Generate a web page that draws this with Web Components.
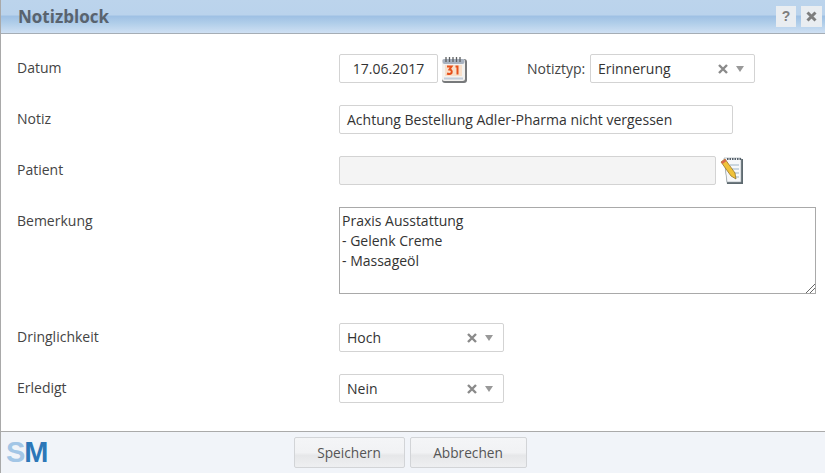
<!DOCTYPE html>
<html lang="de">
<head>
<meta charset="utf-8">
<title>Notizblock</title>
<style>
  html, body { margin: 0; padding: 0; background: #fff; }
  body { width: 825px; height: 473px; overflow: hidden; font-family: "Open Sans", "Liberation Sans", sans-serif; }
</style>
</head>
<body>
<note-dialog heading="Notizblock">
  <form-row label="Datum">
    <text-field style="width:99px;text-align:center">17.06.2017</text-field>
    <calendar-icon></calendar-icon>
    <span style="margin-left:59px;flex:0 0 63px;font-size:14px;color:#444">Notiztyp:</span>
    <combo-box style="width:165px" value="Erinnerung"></combo-box>
  </form-row>
  <form-row label="Notiz">
    <text-field style="width:394px">Achtung Bestellung Adler-Pharma nicht vergessen</text-field>
  </form-row>
  <form-row label="Patient">
    <text-field style="width:377px;background:#f4f4f4"></text-field>
    <notepad-icon></notepad-icon>
  </form-row>
  <form-row label="Bemerkung">
    <memo-field style="width:477px;height:87px">Praxis Ausstattung
- Gelenk Creme
- Massageöl</memo-field>
  </form-row>
  <form-row label="Dringlichkeit" style="margin-top:7px">
    <combo-box style="width:165px" value="Hoch"></combo-box>
  </form-row>
  <form-row label="Erledigt">
    <combo-box style="width:165px" value="Nein"></combo-box>
  </form-row>
  <dlg-button slot="footer" style="width:111px">Speichern</dlg-button>
  <dlg-button slot="footer" style="width:117px">Abbrechen</dlg-button>
</note-dialog>

<script>
class NoteDialog extends HTMLElement {
  connectedCallback() {
    this.attachShadow({ mode: 'open' });
    this.shadowRoot.innerHTML = `
      <style>
        :host {
          display: flex;
          flex-direction: column;
          width: 825px;
          height: 473px;
          box-sizing: border-box;
          border-left: 1px solid #a9a9a9;
          background: #fff;
        }
        header {
          height: 34px;
          box-sizing: border-box;
          display: flex;
          align-items: center;
          justify-content: space-between;
          padding: 0 3px 1px 17px;
          border-bottom: 1px solid #a5adb5;
          background: linear-gradient(180deg, #bcd4ec 0%, #bad3ec 44%, #9fc1e4 50%, #b2cfea 72%, #cfe0f3 100%);
        }
        h1 {
          margin: 0;
          font-size: 17px;
          font-weight: 700;
          color: #59636e;
        }
        .tools { display: flex; gap: 5px; }
        .tools span {
          width: 20px;
          height: 21px;
          display: flex;
          align-items: center;
          justify-content: center;
          background: #e9edf1;
          color: #7d7d7d;
          font: 700 14px "Liberation Sans", sans-serif;
        }
        .tools span:last-child { width: 21px; }
        main {
          flex: 1;
          display: flex;
          flex-direction: column;
          gap: 22px;
          padding: 20px 0 0 16px;
        }
        footer {
          height: 42px;
          box-sizing: border-box;
          position: relative;
          display: flex;
          justify-content: center;
          align-items: flex-start;
          gap: 5px;
          padding: 5px 6px 0 0;
          border-top: 1px solid #aaa;
          background: #f1f4f9;
        }
        .logo {
          position: absolute;
          left: 5px;
          top: 4px;
          font: 700 29px/32px "Liberation Sans", sans-serif;
          letter-spacing: -1px;
          color: #2c77b8;
        }
        .logo b { color: #a3c6e6; }
      </style>
      <header>
        <h1>${this.getAttribute('heading')}</h1>
        <div class="tools">
          <span>?</span>
          <span><svg width="11" height="11" viewBox="0 0 11 11"><path d="M1.500 1.500l8 8M9.500 1.500l-8 8" stroke="#7d7d7d" stroke-width="3"/></svg></span>
        </div>
      </header>
      <main><slot></slot></main>
      <footer>
        <div class="logo"><b>S</b>M</div>
        <slot name="footer"></slot>
      </footer>
    `;
  }
}

class FormRow extends HTMLElement {
  connectedCallback() {
    this.attachShadow({ mode: 'open' });
    this.shadowRoot.innerHTML = `
      <style>
        :host { display: flex; align-items: flex-start; min-height: 29px; }
        label {
          flex: 0 0 322px;
          font-size: 14px;
          line-height: 27px;
          color: #444;
        }
        div { display: flex; align-items: center; }
      </style>
      <label>${this.getAttribute('label')}</label>
      <div><slot></slot></div>
    `;
  }
}

class TextField extends HTMLElement {
  connectedCallback() {
    this.attachShadow({ mode: 'open' });
    this.shadowRoot.innerHTML = `
      <style>
        :host {
          display: block;
          box-sizing: border-box;
          height: 29px;
          padding: 0 7px;
          border: 1px solid #d3d3d3;
          border-radius: 2px;
          background: #fff;
          font-size: 14px;
          line-height: 28px;
          color: #333;
          white-space: nowrap;
        }
      </style>
      <slot></slot>
    `;
  }
}

class MemoField extends HTMLElement {
  connectedCallback() {
    this.attachShadow({ mode: 'open' });
    this.shadowRoot.innerHTML = `
      <style>
        :host {
          display: block;
          position: relative;
          box-sizing: border-box;
          padding: 3px 2px;
          border: 1px solid #a9a9a9;
          background: #fff;
          font-size: 14px;
          line-height: 20px;
          color: #333;
        }
        div { white-space: pre-line; }
        svg { position: absolute; right: 0; bottom: 0; }
      </style>
      <div><slot></slot></div>
      <svg width="10" height="10" viewBox="0 0 10 10"><path d="M1 10 10 1M5 10l5-5" stroke="#666" fill="none"/></svg>
    `;
  }
}

class ComboBox extends HTMLElement {
  connectedCallback() {
    this.attachShadow({ mode: 'open' });
    this.shadowRoot.innerHTML = `
      <style>
        :host {
          display: flex;
          align-items: center;
          box-sizing: border-box;
          height: 29px;
          padding: 0 10px 0 7px;
          border: 1px solid #d3d3d3;
          border-radius: 2px;
          background: #fff;
          font-size: 14px;
          color: #333;
        }
        span { flex: 1; }
        svg { display: block; }
        .x { margin-right: 8px; }
      </style>
      <span>${this.getAttribute('value')}</span>
      <svg class="x" width="10" height="10" viewBox="0 0 10 10"><path d="M1 1 9 9M9 1 1 9" stroke="#8a8a8a" stroke-width="2.4"/></svg>
      <svg width="8" height="6" viewBox="0 0 8 6"><path d="M0 0h8L4 6z" fill="#999"/></svg>
    `;
  }
}

class DlgButton extends HTMLElement {
  connectedCallback() {
    this.attachShadow({ mode: 'open' });
    this.shadowRoot.innerHTML = `
      <style>
        :host {
          display: block;
          box-sizing: border-box;
          height: 31px;
          border: 1px solid #d2d4d7;
          border-radius: 2px;
          background: linear-gradient(180deg, #f4f5f7 0%, #f1f2f4 50%, #e6e7e9 60%, #eeeff1 100%);
          text-align: center;
          font-size: 13.7px;
          line-height: 29px;
          color: #555;
        }
      </style>
      <slot></slot>
    `;
  }
}

class CalendarIcon extends HTMLElement {
  connectedCallback() {
    this.attachShadow({ mode: 'open' });
    this.shadowRoot.innerHTML = `
      <style>:host { display: block; margin-left: 3px; height: 29px; } svg { display: block; }</style>
      <svg width="27" height="29" viewBox="0 0 27 29">
        <rect x="1" y="5" width="25" height="24" rx="3" fill="#77797b"/>
        <rect x="1" y="5" width="23" height="22" rx="2.500" fill="#f4f2ef"/>
        <rect x="1.500" y="5" width="22" height="5" rx="2" fill="#a8b2c0"/>
        <path d="M5 3v5M8.500 3v5M12 3v5M15.500 3v5M19 3v5" stroke="#5d6062" stroke-width="1.300"/>
        <rect x="4" y="11" width="17" height="11" fill="#f8dfca"/>
        <path d="M6 12.500h4.500l-2 3q3 .5 2 3.500q-1.500 1.800-4.500 .5M14.500 12.500h2v8" fill="none" stroke="#e6501a" stroke-width="2"/>
        <path d="M3 24.500h19" stroke="#c3ccd8" stroke-width="2"/>
      </svg>
    `;
  }
}

class NotepadIcon extends HTMLElement {
  connectedCallback() {
    this.attachShadow({ mode: 'open' });
    this.shadowRoot.innerHTML = `
      <style>:host { display: block; margin-left: 3px; height: 29px; } svg { display: block; }</style>
      <svg width="26" height="29" viewBox="0 0 26 29">
        <path d="M5 3h19v25H8z" fill="#5e6a70"/>
        <path d="M5 2h17v24H8z" fill="#f7f8fa" stroke="#9aa5ab" stroke-width=".6"/>
        <path d="M8 3h14" stroke="#55606a" stroke-width="2" stroke-dasharray="1.500 1"/>
        <path d="M11 9h9M12 13h8M14 17h6M15 21h5" stroke="#9db4c6"/>
        <path d="M2 6 6 3 16 17 17 23 12 20z" fill="#f0c23a" stroke="#8a6a20" stroke-width=".7"/>
        <path d="M2 6 6 3 7.500 5 3.500 8z" fill="#d9694a"/>
      </svg>
    `;
  }
}

customElements.define('note-dialog', NoteDialog);
customElements.define('form-row', FormRow);
customElements.define('text-field', TextField);
customElements.define('memo-field', MemoField);
customElements.define('combo-box', ComboBox);
customElements.define('dlg-button', DlgButton);
customElements.define('calendar-icon', CalendarIcon);
customElements.define('notepad-icon', NotepadIcon);
</script>
</body>
</html>
